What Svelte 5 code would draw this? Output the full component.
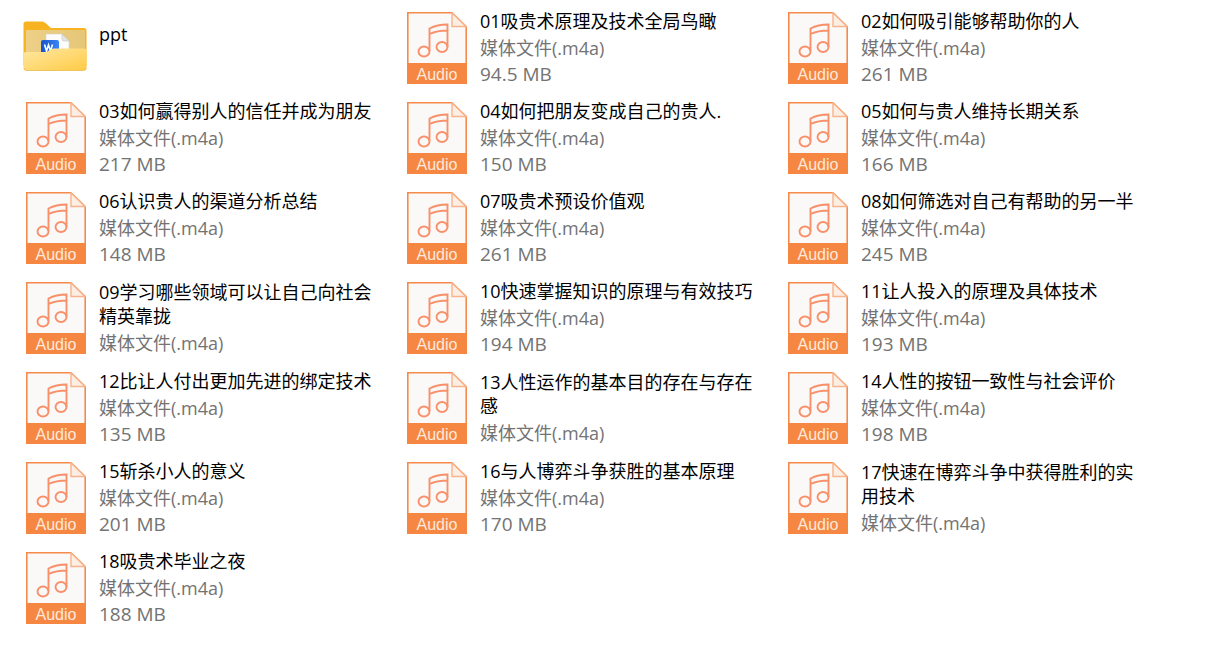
<script>
	const names = [
		'01吸贵术原理及技术全局鸟瞰',
		'02如何吸引能够帮助你的人',
		'03如何赢得别人的信任并成为朋友',
		'04如何把朋友变成自己的贵人.',
		'05如何与贵人维持长期关系',
		'06认识贵人的渠道分析总结',
		'07吸贵术预设价值观',
		'08如何筛选对自己有帮助的另一半',
		'09学习哪些领域可以让自己向社会精英靠拢',
		'10快速掌握知识的原理与有效技巧',
		'11让人投入的原理及具体技术',
		'12比让人付出更加先进的绑定技术',
		'13人性运作的基本目的存在与存在感',
		'14人性的按钮一致性与社会评价',
		'15斩杀小人的意义',
		'16与人博弈斗争获胜的基本原理',
		'17快速在博弈斗争中获得胜利的实用技术',
		'18吸贵术毕业之夜'
	];

	// two-line names leave no room for the size, so those entries are empty
	const sizes = [
		'94.5 MB', '261 MB', '217 MB', '150 MB', '166 MB', '148 MB',
		'261 MB', '245 MB', '', '194 MB', '193 MB', '135 MB',
		'', '198 MB', '201 MB', '170 MB', '', '188 MB'
	];

	const files = names.map((name, i) => ({ name, size: sizes[i] }));
</script>

<ul class="files">
	<li class="item">
		<div class="icon">
			<svg width="64" height="54" viewBox="0 0 64 54" aria-hidden="true">
				<defs>
					<linearGradient id="front" x1="0" y1="0" x2="1" y2="1">
						<stop offset="0" stop-color="#ffe8a3" />
						<stop offset="1" stop-color="#ffcb45" />
					</linearGradient>
					<linearGradient id="inside" x1="0" y1="0" x2="1" y2="0">
						<stop offset="0" stop-color="#edcf87" />
						<stop offset="1" stop-color="#e6c778" />
					</linearGradient>
					<linearGradient id="word" x1="0" y1="0" x2="1" y2="0">
						<stop offset="0" stop-color="#1554c8" />
						<stop offset="1" stop-color="#3b85f7" />
					</linearGradient>
				</defs>
				<path d="M.5 3Q.5.5 3 .5H19Q21 .5 22.500 2L28 7H61Q63.500 7 63.500 9.500V45H.5Z" fill="#f8b322" />
				<rect x="3" y="9" width="59" height="30" rx="1" fill="url(#inside)" />
				<path d="M23 13H39L46 20V32H23Z" fill="#fcfcfc" stroke="#d8d3c8" stroke-width=".6" />
				<path d="M39 13V18Q39 20 41 20H46Z" fill="#e4e4e4" stroke="#c8c5bd" stroke-width=".6" />
				<rect x="18" y="19" width="18" height="17" rx="2" fill="url(#word)" />
				<path d="M21.500 23.500L23.500 30L25.500 24L27.500 30L29.500 23.500" fill="none" stroke="#fff" stroke-width="1.600" />
				<path d="M.5 33Q.5 31 3 31H22Q24 31 26 29.500Q28 27.500 31 27.500H61Q63.500 27.500 63.500 30V47Q63.500 49.500 60.500 49.500H3.500Q.5 49.500 .5 47Z" fill="url(#front)" />
				<path d="M1 47Q1 49.500 3.500 49.500H60.500Q63 49.500 63 47" fill="none" stroke="#e9bb4b" stroke-width=".8" />
			</svg>
		</div>
		<div class="text">
			<p class="name">ppt</p>
			<p class="meta"></p>
		</div>
	</li>
	{#each files as file}
		<li class="item">
			<div class="icon">
				<svg width="62" height="72" viewBox="-2 0 62 72" aria-hidden="true">
					<path d="M.8.8H45L59.200 14.500V71.200H.8Z" fill="#faf9f8" stroke="#f58a4b" stroke-width="1.600" />
					<path d="M45 1V14.500H59Z" fill="#fdeee4" stroke="#f8b48c" stroke-width="1.400" />
					<rect y="51" width="60" height="21" fill="#f58742" />
					<g fill="none" stroke="#f8906a" stroke-width="1.900">
						<ellipse cx="17" cy="39.500" rx="5.500" ry="5" />
						<ellipse cx="35" cy="35" rx="5.500" ry="5" />
						<path d="M22.500 39V16.500Q30 12.500 40.500 12.500V35M22.500 22Q30 18.500 40.500 18.500" />
					</g>
					<text class="label" x="30" y="68" text-anchor="middle">Audio</text>
				</svg>
			</div>
			<div class="text">
				<p class="name">{file.name}</p>
				<p class="meta">媒体文件(.m4a)</p>
				{#if file.size}
					<p class="meta size">{file.size}</p>
				{/if}
			</div>
		</li>
	{/each}
</ul>

<style>
	:global(body) {
		background: #fff;
		margin: 0;
	}

	.files {
		display: grid;
		font-family: 'Open Sans', 'Noto Sans CJK SC', sans-serif;
		font-size: 18px;
		grid-auto-rows: 90px;
		grid-template-columns: repeat(auto-fill, 381px);
		list-style: none;
		margin: 0;
		padding: 3px 0 16px 23px;
	}

	.item {
		align-items: center;
		display: flex;
		gap: 12px;
	}

	.icon {
		display: flex;
		flex: none;
		justify-content: center;
		width: 64px;
	}

	.label {
		fill: #ffe9dc;
		font-family: 'Liberation Sans', sans-serif;
		font-size: 16px;
	}

	.text {
		width: 280px;
	}

	.name,
	.meta {
		margin: 0;
	}

	.name {
		color: #000;
		line-height: 24px;
		padding-bottom: 2px;
	}

	.meta {
		color: #737373;
		line-height: 26px;
		min-height: 26px;
	}

	.size {
		font-size: 19px;
	}
</style>
